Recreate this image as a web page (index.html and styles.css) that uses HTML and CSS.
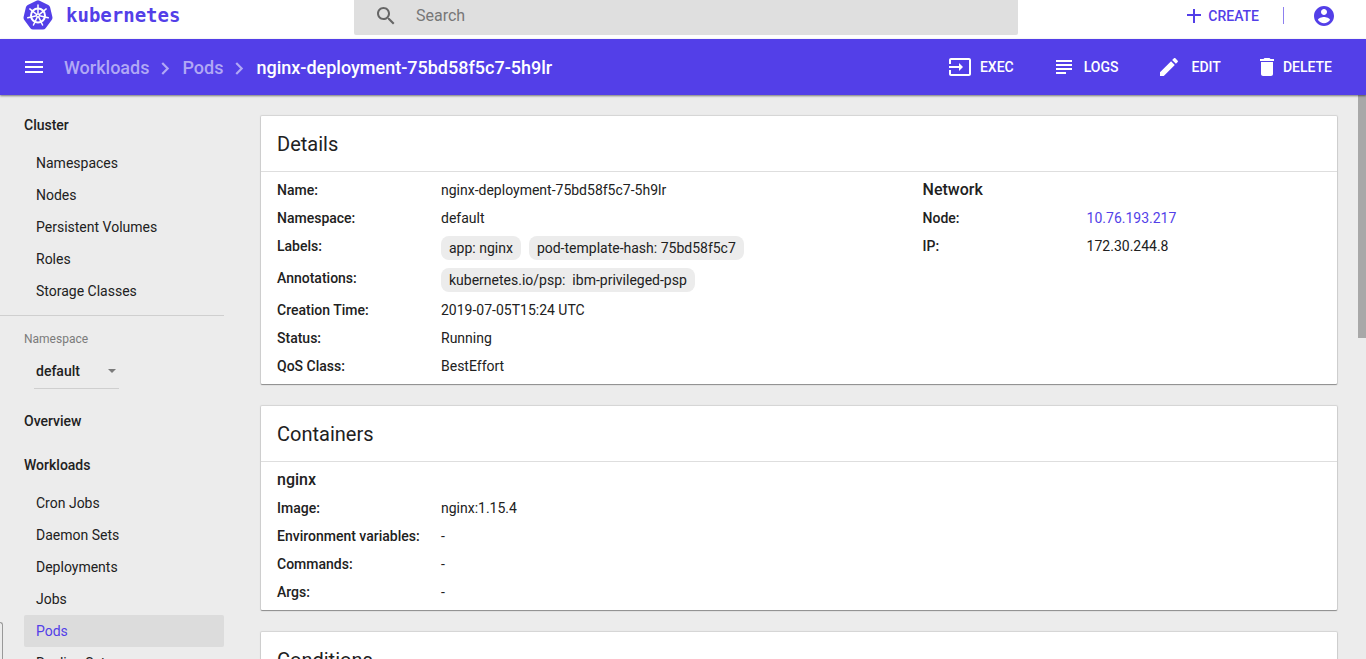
FILE: index.html
```html
<!DOCTYPE html>
<html lang="en">
<head>
<meta charset="utf-8">
<title>nginx-deployment-75bd58f5c7-5h9lr - Kubernetes Dashboard</title>
<link rel="stylesheet" href="styles.css">
</head>
<body>
<header class="topbar">
  <a class="brand" href="#">
    <svg class="brand-mark" viewBox="0 0 30 30" aria-hidden="true">
      <path d="M13.400 .8Q15-.2 16.600 .8L25.300 5Q26.700 5.700 27.100 7.200L29.400 17Q29.700 18.700 28.700 20L22.600 28.300Q21.600 29.600 20 29.600H10Q8.400 29.600 7.400 28.300L1.300 20Q.3 18.700 .6 17L2.900 7.200Q3.300 5.700 4.700 5Z" fill="currentColor"/>
      <g stroke="#fff" fill="none" stroke-linecap="round">
        <circle cx="15" cy="15.500" r="7" stroke-width="2"/>
        <g stroke-width="1.500">
          <path id="spoke" d="M15 14V5"/>
          <use href="#spoke" transform="rotate(51.430 15 15.500)"/>
          <use href="#spoke" transform="rotate(102.860 15 15.500)"/>
          <use href="#spoke" transform="rotate(154.290 15 15.500)"/>
          <use href="#spoke" transform="rotate(205.710 15 15.500)"/>
          <use href="#spoke" transform="rotate(257.140 15 15.500)"/>
          <use href="#spoke" transform="rotate(308.570 15 15.500)"/>
        </g>
        <circle cx="15" cy="15.500" r="1.500" stroke-width="1"/>
      </g>
    </svg>
    <span class="brand-name">kubernetes</span>
  </a>
  <label class="search">
    <svg class="icon" viewBox="0 0 24 24" aria-hidden="true"><path d="M15.500 14h-.79l-.28-.27C15.410 12.590 16 11.110 16 9.500 16 5.910 13.090 3 9.500 3S3 5.910 3 9.500 5.910 16 9.500 16c1.610 0 3.090-.59 4.230-1.570l.27.28v.79l5 4.990L20.490 19l-4.990-5zm-6 0C7.010 14 5 11.990 5 9.500S7.010 5 9.500 5 14 7.010 14 9.500 11.990 14 9.500 14z"/></svg>
    <input class="search-input" type="text" placeholder="Search" aria-label="Search">
  </label>
  <div class="top-actions">
    <button class="create" type="button">
      <svg class="plus" viewBox="0 0 14 14" aria-hidden="true"><path d="M6 0h2v5h6v2H8v7H6V7H0V5h6z"/></svg>
      CREATE
    </button>
    <span class="separator"></span>
    <button class="account" type="button" aria-label="Account">
      <svg class="icon" viewBox="0 0 24 24" aria-hidden="true"><path d="M12 2C6.480 2 2 6.480 2 12s4.480 10 10 10 10-4.480 10-10S17.520 2 12 2zm0 3c1.660 0 3 1.340 3 3s-1.340 3-3 3-3-1.340-3-3 1.340-3 3-3zm0 14.200c-2.500 0-4.710-1.280-6-3.220.03-1.990 4-3.080 6-3.080 1.990 0 5.970 1.090 6 3.080-1.290 1.940-3.500 3.220-6 3.220z"/></svg>
    </button>
  </div>
</header>

<div class="actionbar">
  <button class="menu" type="button" aria-label="Menu">
    <svg class="icon" viewBox="0 0 24 24" aria-hidden="true"><path d="M3 18h18v-2H3v2zm0-5h18v-2H3v2zm0-7v2h18V6H3z"/></svg>
  </button>
  <nav class="breadcrumbs" aria-label="Breadcrumbs">
    <a href="#">Workloads</a>
    <svg class="chevron" viewBox="0 0 8 12" aria-hidden="true"><path d="M1 1l5 5-5 5"/></svg>
    <a href="#">Pods</a>
    <svg class="chevron" viewBox="0 0 8 12" aria-hidden="true"><path d="M1 1l5 5-5 5"/></svg>
    <span class="current">nginx-deployment-75bd58f5c7-5h9lr</span>
  </nav>
  <div class="actions">
    <button type="button"><svg class="icon" viewBox="0 0 24 24" aria-hidden="true"><path d="M21 3.010H3c-1.100 0-2 .9-2 2V9h2V4.990h18v14.030H3V15H1v4.010c0 1.100.9 1.980 2 1.980h18c1.100 0 2-.88 2-1.980v-14c0-1.110-.9-2-2-2zM11 16l4-4-4-4v3H1v2h10v3z"/></svg>EXEC</button>
    <button type="button"><svg class="icon" viewBox="0 0 24 24" aria-hidden="true"><path d="M4 5h16v2H4zm0 4h16v2H4zm0 4h16v2H4zm0 4h10v2H4z"/></svg>LOGS</button>
    <button class="edit" type="button"><svg class="icon" viewBox="0 0 24 24" aria-hidden="true"><path d="M3 17.250V21h3.750L17.810 9.940l-3.750-3.750L3 17.250zM20.710 7.040c.39-.39.39-1.020 0-1.410l-2.340-2.340c-.39-.39-1.020-.39-1.410 0l-1.830 1.830 3.750 3.750 1.830-1.830z"/></svg>EDIT</button>
    <button class="delete" type="button"><svg class="icon" viewBox="0 0 24 24" aria-hidden="true"><path d="M6 19c0 1.100.9 2 2 2h8c1.100 0 2-.9 2-2V7H6v12zM19 4h-3.500l-1-1h-5l-1 1H5v2h14V4z"/></svg>DELETE</button>
  </div>
</div>

<div class="layout">
  <nav class="sidebar" aria-label="Resources">
    <a class="nav-head" href="#">Cluster</a>
    <a class="nav-item" href="#">Namespaces</a>
    <a class="nav-item" href="#">Nodes</a>
    <a class="nav-item" href="#">Persistent Volumes</a>
    <a class="nav-item" href="#">Roles</a>
    <a class="nav-item" href="#">Storage Classes</a>
    <div class="namespace">
      <label class="namespace-label" for="namespace">Namespace</label>
      <div class="namespace-field">
        <select id="namespace"><option>default</option></select>
        <svg class="caret" viewBox="0 0 8 4" aria-hidden="true"><path d="M0 0h8L4 4z"/></svg>
      </div>
    </div>
    <a class="nav-head" href="#">Overview</a>
    <a class="nav-head" href="#">Workloads</a>
    <a class="nav-item" href="#">Cron Jobs</a>
    <a class="nav-item" href="#">Daemon Sets</a>
    <a class="nav-item" href="#">Deployments</a>
    <a class="nav-item" href="#">Jobs</a>
    <a class="nav-item selected" href="#" aria-current="page">Pods</a>
    <a class="nav-item" href="#">Replica Sets</a>
  </nav>

  <main class="content">
    <section class="card">
      <h2 class="card-title">Details</h2>
      <div class="card-body">
        <dl class="props wide">
          <div class="row"><dt>Name:</dt><dd>nginx-deployment-75bd58f5c7-5h9lr</dd></div>
          <div class="row"><dt>Namespace:</dt><dd>default</dd></div>
          <div class="row"><dt>Labels:</dt><dd class="chips"><span class="chip">app: nginx</span><span class="chip">pod-template-hash: 75bd58f5c7</span></dd></div>
          <div class="row"><dt>Annotations:</dt><dd class="chips"><span class="chip">kubernetes.io/psp:&nbsp; ibm-privileged-psp</span></dd></div>
          <div class="row"><dt>Creation Time:</dt><dd>2019-07-05T15:24 UTC</dd></div>
          <div class="row"><dt>Status:</dt><dd>Running</dd></div>
          <div class="row"><dt>QoS Class:</dt><dd>BestEffort</dd></div>
        </dl>
        <div class="props narrow">
          <h3 class="subhead">Network</h3>
          <dl>
            <div class="row"><dt>Node:</dt><dd><a href="#">10.76.193.217</a></dd></div>
            <div class="row"><dt>IP:</dt><dd>172.30.244.8</dd></div>
          </dl>
        </div>
      </div>
    </section>

    <section class="card">
      <h2 class="card-title">Containers</h2>
      <div class="card-body">
        <div class="props wide">
          <h3 class="subhead">nginx</h3>
          <dl>
            <div class="row"><dt>Image:</dt><dd>nginx:1.15.4</dd></div>
            <div class="row"><dt>Environment variables:</dt><dd>-</dd></div>
            <div class="row"><dt>Commands:</dt><dd>-</dd></div>
            <div class="row"><dt>Args:</dt><dd>-</dd></div>
          </dl>
        </div>
      </div>
    </section>

    <section class="card">
      <h2 class="card-title">Conditions</h2>
    </section>
  </main>
  <div class="scrollbar"></div>
</div>
<div class="status-bubble"></div>
</body>
</html>
```
FILE: styles.css
```css
* {
  box-sizing: border-box;
}

body {
  margin: 0;
  height: 100vh;
  display: flex;
  flex-direction: column;
  overflow: hidden;
  background: #ececec;
  color: #212121;
  font: 14px/20px Roboto, sans-serif;
}

a {
  color: #533fe8;
  text-decoration: none;
}

button {
  display: flex;
  align-items: center;
  padding: 0;
  border: 0;
  background: none;
  color: inherit;
  font: 500 14px/20px Roboto, sans-serif;
}

svg {
  flex: none;
  fill: currentColor;
}

dl,
dd,
h2,
h3 {
  margin: 0;
}

.icon {
  width: 24px;
  height: 24px;
}

.topbar {
  flex: none;
  display: flex;
  align-items: flex-start;
  height: 39px;
  background: #fff;
  color: #533fe8;
}

.brand {
  display: flex;
  align-items: center;
  gap: 13px;
  width: 354px;
  height: 30px;
  padding-left: 23px;
}

.brand-mark {
  width: 30px;
  height: 30px;
}

.brand-name {
  font: bold 19px/24px "DejaVu Sans Mono", monospace;
}

.search {
  flex: 1;
  display: flex;
  align-items: center;
  gap: 18px;
  height: 35px;
  padding: 0 20px 4px;
  border-radius: 0 0 2px 2px;
  background: #dfdfdf;
  color: #666;
}

.search-input {
  flex: 1;
  min-width: 0;
  padding: 0;
  border: 0;
  outline: 0;
  background: none;
  color: #212121;
  font: 16px/24px Roboto, sans-serif;
}

.search-input::placeholder {
  color: #777;
}

.top-actions {
  display: flex;
  justify-content: flex-end;
  align-items: center;
  width: 348px;
  height: 31px;
  padding-right: 30px;
}

.create {
  gap: 7px;
}

.plus {
  width: 14px;
  height: 14px;
}

.separator {
  width: 1px;
  height: 17px;
  margin: 0 28px 0 24px;
  background: #8d80ef;
}

.actionbar {
  flex: none;
  position: relative;
  z-index: 1;
  display: flex;
  align-items: center;
  height: 56px;
  padding: 0 34px 0 22px;
  background: #533fe8;
  color: #fff;
  box-shadow: 0 1px 2px rgba(0, 0, 0, 0.5);
}

.breadcrumbs {
  display: flex;
  align-items: center;
  gap: 12px;
  margin-left: 18px;
  padding-top: 2px;
  font-size: 18px;
  font-weight: 500;
}

.breadcrumbs a,
.chevron {
  color: #b1a8f5;
}

.chevron {
  width: 9px;
  height: 13px;
  fill: none;
  stroke: currentColor;
  stroke-width: 2;
}

.actions {
  display: flex;
  gap: 38px;
  margin-left: auto;
}

.actions button {
  gap: 8px;
}

.actions .edit {
  gap: 11px;
}

.actions .delete {
  gap: 4px;
  margin-left: -4px;
}

.layout {
  flex: 1;
  min-height: 0;
  display: flex;
}

.sidebar {
  flex: none;
  width: 224px;
  padding-top: 8px;
  overflow: hidden;
}

.nav-head,
.nav-item {
  display: block;
  color: #212121;
}

.nav-head {
  padding: 12px 24px;
  font-weight: 500;
}

.nav-item {
  margin-left: 24px;
  padding: 6px 12px;
  border-radius: 2px;
}

.nav-item.selected {
  background: #dcdcdc;
  color: #533fe8;
}

.namespace {
  margin-top: 8px;
  padding: 13px 24px 10px;
  border-top: 1px solid #cfcfcf;
}

.namespace-label {
  display: block;
  color: #7b7b7b;
  font-size: 12px;
}

.namespace-field {
  display: flex;
  align-items: center;
  width: 85px;
  height: 40px;
  margin-left: 10px;
  padding: 5px 3px 0 2px;
  border-bottom: 1px solid #cfcfcf;
}

.namespace-field select {
  flex: 1;
  min-width: 0;
  padding: 0;
  border: 0;
  appearance: none;
  background: none;
  color: #212121;
  font: 500 14px/20px Roboto, sans-serif;
}

.caret {
  width: 8px;
  height: 4px;
  color: #7b7b7b;
}

.content {
  flex: 1;
  min-width: 0;
  display: flex;
  flex-direction: column;
  gap: 22px;
  padding: 21px 21px 21px 37px;
  overflow: hidden;
}

.card {
  flex: none;
  border-radius: 1px;
  background: #fff;
  box-shadow: 0 0 1px 1px rgba(0, 0, 0, 0.1), 0 1px 1px rgba(0, 0, 0, 0.35);
}

.card-title {
  padding: 16px 16px 15px;
  border-bottom: 1px solid #dedede;
  font-size: 20px;
  line-height: 24px;
  font-weight: 400;
}

.card-body {
  display: flex;
  padding: 4px 0;
}

.props {
  padding: 0 16px;
}

.wide {
  width: 60%;
}

.narrow {
  width: 40%;
}

.subhead {
  padding: 4px 0;
  font-size: 16px;
  line-height: 20px;
  font-weight: 500;
}

.row {
  display: flex;
}

.row dt {
  flex: none;
  width: 164px;
  padding: 4px 0;
  font-weight: 500;
}

.row dd {
  padding: 4px 0;
}

.chips {
  display: flex;
  flex-wrap: wrap;
  gap: 8px;
}

.chip {
  padding: 2px 8px;
  border-radius: 8px;
  background: #ececec;
}

.scrollbar {
  flex: none;
  width: 8px;
  height: 43%;
  background: #a8a8a8;
}

.status-bubble {
  position: absolute;
  bottom: 0;
  left: 0;
  width: 3px;
  height: 37px;
  border: 1px solid #999;
  border-width: 1px 1px 0 0;
  border-radius: 0 3px 0 0;
}
```
